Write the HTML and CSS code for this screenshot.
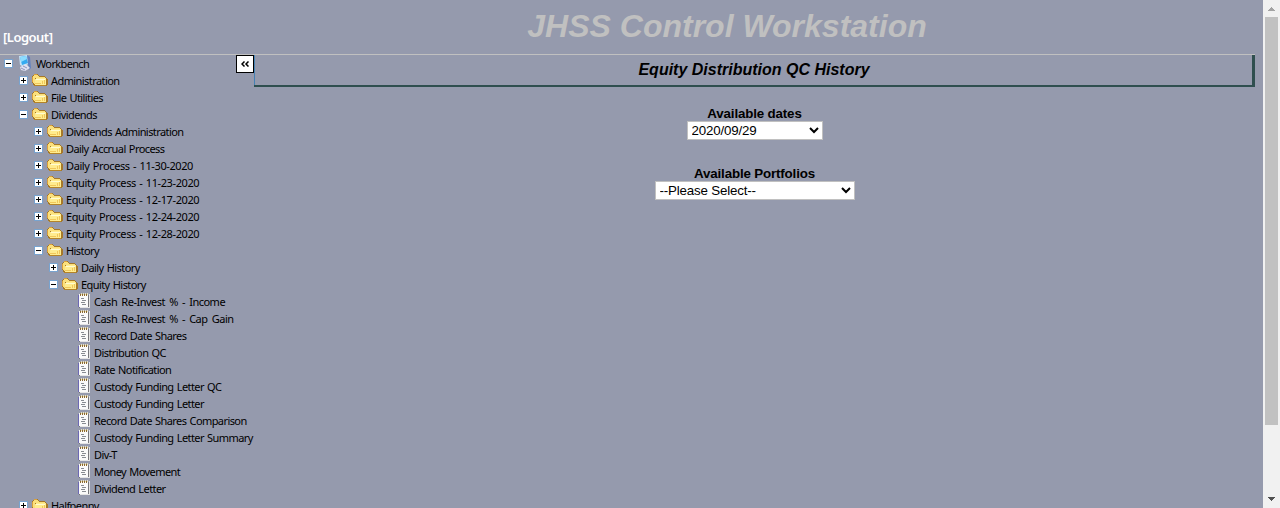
FILE: index.html
```
<!DOCTYPE html>
<html lang="en">
<head>
<meta charset="utf-8">
<title>JHSS Control Workstation</title>
<link rel="stylesheet" href="styles.css">
</head>
<body>
<svg class="defs" aria-hidden="true">
  <symbol id="plus" viewBox="0 0 9 9"><path d="M0 0h9v9H0z" fill="#78a3cf"/><path d="M1 1h7v7H1z" fill="#fff"/><path d="M2 4h5v1H2zM4 2h1v5H4z" fill="#000"/></symbol>
  <symbol id="minus" viewBox="0 0 9 9"><path d="M0 0h9v9H0z" fill="#78a3cf"/><path d="M1 1h7v7H1z" fill="#fff"/><path d="M2 4h5v1H2z" fill="#000"/></symbol>
  <symbol id="folder" viewBox="0 0 16 14">
    <path d="M0 3h1V2h1V1h4v1h1v1h6v1h1v1h1v1h1v6h-1v1H2v-1H1v-2H0z" fill="#a5782a"/>
    <path d="M1 3h1V2h4v1h1v1h6v1H3v6H2v-1H1z" fill="#fbe07c"/>
    <path d="M2 1h3v1H2zM0 4h1v5H0z" fill="#dba03a"/>
    <path d="M3 6h1V5h10v7H3z" fill="#ffec8e"/>
    <path d="M4 6h9v1H4z" fill="#fffbd2"/>
    <path d="M3 10h6v1H3zM10 8h1v3h-1zM12 7h1v4h-1z" fill="#f1c75a"/>
    <path d="M2 12h12v1H2z" fill="#b58428"/>
  </symbol>
  <symbol id="page" viewBox="0 0 12 16">
    <path d="M1 2h10v13H1z" fill="#77777c"/>
    <path d="M0 2h1v12H0z" fill="#6c68b4"/>
    <path d="M1 1h9v13H1z" fill="#fafafa"/>
    <path d="M11 1h1v14H2v-1h9z" fill="#e4e4e4"/>
    <path d="M2 1h1v2H2zM4 1h1v2H4zM6 1h1v2H6zM8 1h1v2H8z" fill="#8c682c"/>
    <path d="M3 0h1v2H3zM5 0h1v2H5zM7 0h1v2H7zM9 0h1v2H9z" fill="#eee2b8"/>
    <path d="M3 5h3v1H3zM4 7h4v1H4zM3 9h4v1H3zM4 11h4v1H4z" fill="#888c92"/>
  </symbol>
  <symbol id="computer" viewBox="0 0 14 16">
    <path d="M1 1l8-1 2 9-7 2-2-1z" fill="#c4e2f8"/>
    <path d="M2 2l6-1 2 7-6 2z" fill="#35aaf0"/>
    <path d="M2 2l6-1 1 3-6 3z" fill="#8cdcff"/>
    <path d="M9 0l3 2 1 11-2 2-1-6z" fill="#6381bd"/>
    <path d="M2 12l6-3 4 4-5 3-4-1z" fill="#dfe1f1"/>
    <path d="M3 13l4 2M5 11l4 2" stroke="#8e93bd"/>
  </symbol>
</svg>
<div class="window">
  <div class="page">
    <header class="banner">
      <a class="logout">[Logout]</a>
      <h1 class="title">JHSS Control Workstation</h1>
    </header>
    <div class="body">
      <nav class="tree">
        <div class="row root"><svg class="toggle"><use href="#minus"/></svg><svg class="computer"><use href="#computer"/></svg><span>Workbench</span></div>
        <div class="row l1"><svg class="toggle"><use href="#plus"/></svg><svg class="folder"><use href="#folder"/></svg><span>Administration</span></div>
        <div class="row l1"><svg class="toggle"><use href="#plus"/></svg><svg class="folder"><use href="#folder"/></svg><span>File Utilities</span></div>
        <div class="row l1"><svg class="toggle"><use href="#minus"/></svg><svg class="folder"><use href="#folder"/></svg><span>Dividends</span></div>
        <div class="row l2"><svg class="toggle"><use href="#plus"/></svg><svg class="folder"><use href="#folder"/></svg><span>Dividends Administration</span></div>
        <div class="row l2"><svg class="toggle"><use href="#plus"/></svg><svg class="folder"><use href="#folder"/></svg><span>Daily Accrual Process</span></div>
        <div class="row l2 dated"><svg class="toggle"><use href="#plus"/></svg><svg class="folder"><use href="#folder"/></svg><span>Daily Process - 11-30-2020</span></div>
        <div class="row l2 dated"><svg class="toggle"><use href="#plus"/></svg><svg class="folder"><use href="#folder"/></svg><span>Equity Process - 11-23-2020</span></div>
        <div class="row l2 dated"><svg class="toggle"><use href="#plus"/></svg><svg class="folder"><use href="#folder"/></svg><span>Equity Process - 12-17-2020</span></div>
        <div class="row l2 dated"><svg class="toggle"><use href="#plus"/></svg><svg class="folder"><use href="#folder"/></svg><span>Equity Process - 12-24-2020</span></div>
        <div class="row l2 dated"><svg class="toggle"><use href="#plus"/></svg><svg class="folder"><use href="#folder"/></svg><span>Equity Process - 12-28-2020</span></div>
        <div class="row l2"><svg class="toggle"><use href="#minus"/></svg><svg class="folder"><use href="#folder"/></svg><span>History</span></div>
        <div class="row l3"><svg class="toggle"><use href="#plus"/></svg><svg class="folder"><use href="#folder"/></svg><span>Daily History</span></div>
        <div class="row l3"><svg class="toggle"><use href="#minus"/></svg><svg class="folder"><use href="#folder"/></svg><span>Equity History</span></div>
        <div class="row leaf percent"><svg class="doc"><use href="#page"/></svg><span>Cash Re-Invest % - Income</span></div>
        <div class="row leaf percent"><svg class="doc"><use href="#page"/></svg><span>Cash Re-Invest % - Cap Gain</span></div>
        <div class="row leaf"><svg class="doc"><use href="#page"/></svg><span>Record Date Shares</span></div>
        <div class="row leaf"><svg class="doc"><use href="#page"/></svg><span>Distribution QC</span></div>
        <div class="row leaf"><svg class="doc"><use href="#page"/></svg><span>Rate Notification</span></div>
        <div class="row leaf"><svg class="doc"><use href="#page"/></svg><span>Custody Funding Letter QC</span></div>
        <div class="row leaf"><svg class="doc"><use href="#page"/></svg><span>Custody Funding Letter</span></div>
        <div class="row leaf"><svg class="doc"><use href="#page"/></svg><span>Record Date Shares Comparison</span></div>
        <div class="row leaf"><svg class="doc"><use href="#page"/></svg><span>Custody Funding Letter Summary</span></div>
        <div class="row leaf"><svg class="doc"><use href="#page"/></svg><span>Div-T</span></div>
        <div class="row leaf"><svg class="doc"><use href="#page"/></svg><span>Money Movement</span></div>
        <div class="row leaf"><svg class="doc"><use href="#page"/></svg><span>Dividend Letter</span></div>
        <div class="row l1"><svg class="toggle"><use href="#plus"/></svg><svg class="folder"><use href="#folder"/></svg><span>Halfpenny</span></div>
        <button class="collapse" aria-label="Collapse"><svg viewBox="0 0 8 6"><path d="M3.500 .5L1 3l2.500 2.500M7.500 .5L5 3l2.500 2.500" fill="none" stroke="#000" stroke-width="1.500"/></svg></button>
      </nav>
      <main class="content">
        <h2 class="heading">Equity Distribution QC History</h2>
        <form class="form">
          <label for="dates">Available dates</label>
          <select id="dates" class="dates"><option>2020/09/29</option></select>
          <label for="portfolios">Available Portfolios</label>
          <select id="portfolios" class="portfolios"><option>--Please Select--</option></select>
        </form>
      </main>
    </div>
  </div>
  <div class="scrollbar">
    <svg class="arrow" viewBox="0 0 17 17"><path d="M8 7h1v1h1v1h1v1h1v1H5v-1h1V9h1V8h1z" fill="#a3a3a3"/></svg>
    <div class="thumb"></div>
    <svg class="arrow" viewBox="0 0 17 17"><path d="M5 6h7v1h-1v1h-1v1H9v1H8V9H7V8H6V7H5z" fill="#505050"/></svg>
  </div>
</div>
</body>
</html>
```
FILE: styles.css
```
* { box-sizing: border-box; }
body { margin: 0; background: #959aad; font-family: "Liberation Sans", Arial, sans-serif; overflow: hidden; }
.defs { display: none; }
.window { display: flex; height: 508px; overflow: hidden; }
.page { flex: 1; padding-right: 8px; min-width: 0; }
.banner { display: flex; height: 55px; border-bottom: 1px solid #c0c0c0; }
.logout { width: 199px; padding: 28px 0 0 3px; font: 600 13px/19px "Noto Sans", sans-serif; letter-spacing: -.5px; color: #fff; }
.title { flex: 1; margin: 0; padding-top: 8px; font-size: 32px; line-height: 37px; font-style: italic; text-align: center; color: #c0c0c0; }
.body { display: flex; height: 453px; }
.tree { position: relative; width: 254px; height: 453px; overflow: hidden; font: 11px/17px "Noto Sans", sans-serif; letter-spacing: -.58px; word-spacing: .9px; color: #000; }
.row { display: flex; align-items: flex-start; height: 17px; white-space: nowrap; }
.row svg { flex: none; }
.root { padding-left: 4px; letter-spacing: -.64px; }
.l1 { padding-left: 19px; }
.l2 { padding-left: 34px; }
.l3 { padding-left: 49px; }
.leaf { padding-left: 78px; }
.dated { letter-spacing: -.4px; }
.percent { letter-spacing: -.5px; word-spacing: 1.8px; }
.toggle { width: 9px; height: 9px; margin: 4px 4px 0 0; }
.computer { width: 14px; height: 16px; margin: 0 4px 0 1px; }
.folder { width: 16px; height: 14px; margin: 1px 3px 0 0; }
.doc { width: 12px; height: 16px; margin: 0 4px 0 0; }
.collapse { position: absolute; right: 0; top: 0; display: flex; align-items: center; justify-content: center; width: 18px; height: 18px; padding: 0; border: 1px solid #000; background: #fff; }
.collapse svg { width: 8px; height: 6px; }
.content { flex: 1; }
.heading { height: 32px; margin: 0; padding-left: 2px; border: 0 solid #2f4f4f; border-width: 0 3px 2px 0; box-shadow: inset 1px 0 #4682b4; font-size: 16px; line-height: 29px; font-style: italic; text-align: center; }
.form { display: flex; flex-direction: column; align-items: center; padding-top: 19px; }
.form label { height: 15px; font-weight: bold; font-size: 13.333px; line-height: 16px; letter-spacing: -.15px; }
.form select { height: 19px; margin-bottom: 26px; padding: 0; border: 1px solid #c0c0c0; border-radius: 0; background-color: #fff; color: #000; font: 13.333px "Liberation Sans", Arial, sans-serif; letter-spacing: -.18px; }
.dates { width: 136px; }
.portfolios { width: 200px; }
.scrollbar { display: flex; flex-direction: column; width: 17px; background: #f1f1f1; }
.arrow { width: 17px; height: 17px; }
.thumb { height: 408px; margin: 0 2px 66px; background: #c1c1c1; }
```
